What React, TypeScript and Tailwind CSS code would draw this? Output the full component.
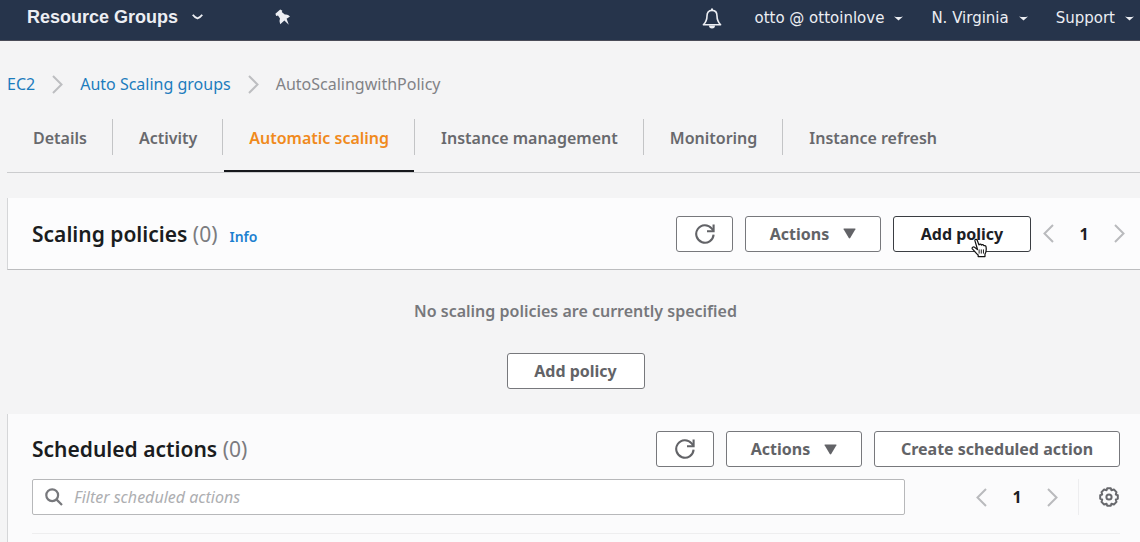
import React from "react";

const BODY = "font-['Noto_Sans','Open_Sans',sans-serif]";

function Caret({ className = "" }: { className?: string }) {
  return (
    <svg className={className} width="9" height="5" viewBox="0 0 9 5" fill="currentColor" aria-hidden="true">
      <path d="M0 0.4 Q4.5 1.6 9 0.4 L4.5 4.6 Z" />
    </svg>
  );
}

function Chevron({ left = false }: { left?: boolean }) {
  return (
    <svg width="11" height="19" viewBox="0 0 11 19" fill="none" stroke="currentColor" strokeWidth="2" aria-hidden="true">
      <path d={left ? "M10 1 L1.5 9.5 L10 18" : "M1 1 L9.5 9.5 L1 18"} />
    </svg>
  );
}

function RefreshIcon() {
  return (
    <svg width="20" height="20" viewBox="0 0 20 20" fill="none" stroke="currentColor" strokeWidth="2.1" aria-hidden="true">
      <path d="M18.6 10.6 A8.7 8.7 0 1 1 16.6 4.4 L18.4 6.6" />
      <path d="M18.6 0.6 V7.2 H12" />
    </svg>
  );
}

function PinIcon() {
  return (
    <svg width="16" height="17" viewBox="0 0 16 17" fill="currentColor" aria-hidden="true">
      <path d="M5.2 0.4 L7.4 1.8 L6.8 3 L9.8 5.6 Q12.6 4.8 15 7.6 L11.6 9.8 L13.8 15.8 L9.4 11.6 L5.2 15.2 Q3.8 12.4 5 9.6 L3 6.6 L1.2 7 L0.4 4.8 Z" />
    </svg>
  );
}

function BellIcon() {
  return (
    <svg width="20" height="21" viewBox="0 0 20 21" fill="none" stroke="currentColor" strokeWidth="1.6" strokeLinejoin="round" aria-hidden="true">
      <path d="M10 2.4 C6.4 2.4 5 5 5 8 C5 12.8 3.8 14.4 1.4 16.8 H18.6 C16.2 14.4 15 12.8 15 8 C15 5 13.6 2.4 10 2.4 Z" />
      <path d="M10 0.6 V2.4" strokeWidth="2" />
      <path d="M7 17.4 A3 3 0 0 0 13 17.4 Z" fill="currentColor" stroke="none" />
    </svg>
  );
}

function GearIcon() {
  return (
    <svg width="20" height="20" viewBox="0 0 20 20" fill="none" stroke="currentColor" strokeWidth="2" strokeLinejoin="round" aria-hidden="true">
      <path d="M8.2 1.2 H11.8 L12.4 3.2 L14.9 2.5 L17.5 5.1 L16.8 7.6 L18.8 8.2 V11.8 L16.8 12.4 L17.5 14.9 L14.9 17.5 L12.4 16.8 L11.8 18.8 H8.2 L7.6 16.8 L5.1 17.5 L2.5 14.9 L3.2 12.4 L1.2 11.8 V8.2 L3.2 7.6 L2.5 5.1 L5.1 2.5 L7.6 3.2 Z" />
      <circle cx="10" cy="10" r="2.6" />
    </svg>
  );
}

function HandPointer() {
  return (
    <svg
      className="pointer-events-none absolute top-[21px] left-[77px]"
      width="17"
      height="20"
      viewBox="0 0 18 21"
      fill="#fff"
      stroke="#111"
      strokeWidth="1.3"
      strokeLinejoin="round"
      aria-hidden="true"
    >
      <path d="M6.6 11 L4.2 3 C3.8 1.2 6 0.6 6.6 2.2 L8.4 7.2 C9 6.2 10.6 6.2 11 7.4 C11.8 6.6 13.2 6.8 13.5 8 C14.8 7.6 16 8.4 16 9.8 C16.4 13 16 15 14.8 17 V19.6 H7.6 V18 C5.6 16.4 4 14 1.4 11.4 C0.6 10 2.4 8.8 3.8 9.8 L6.8 12.2 Z" />
      <path d="M8.6 12 V16.4 M10.9 12 V16.4 M13.2 12 V16.4" strokeWidth="1" />
    </svg>
  );
}

type ButtonProps = { strong?: boolean; label?: string; className?: string; children: React.ReactNode };

function Button({ strong = false, label, className = "px-6", children }: ButtonProps) {
  return (
    <button
      type="button"
      aria-label={label}
      className={`relative flex h-9 shrink-0 items-center justify-center rounded-[3px] border bg-white text-base font-bold whitespace-nowrap ${
        strong ? "border-[#3a3d42] text-[#1d2025]" : "border-[#77787c] text-[#626367]"
      } ${className}`}
    >
      {children}
    </button>
  );
}

function ActionsButton() {
  return (
    <Button className="w-[136px] gap-3.5">
      Actions
      <svg width="13" height="11" viewBox="0 0 13 11" fill="currentColor" aria-hidden="true">
        <path d="M1 0.5 H12 Q12.8 0.5 12.4 1.3 L7.2 10 Q6.5 10.9 5.8 10 L0.6 1.3 Q0.2 0.5 1 0.5 Z" />
      </svg>
    </Button>
  );
}

function Pager() {
  return (
    <nav aria-label="Pagination" className="flex items-center text-base font-bold text-[#1d2025]">
      <button type="button" aria-label="Previous page" className="text-[#b9babd]">
        <Chevron left />
      </button>
      <button type="button" aria-current="page" className="w-[60px]">
        1
      </button>
      <button type="button" aria-label="Next page" className="text-[#b9babd]">
        <Chevron />
      </button>
    </nav>
  );
}

function SectionTitle({ children }: { children: React.ReactNode }) {
  return (
    <h2 className="text-[21px] leading-7 font-semibold text-[#1a1c20]">
      {children} <span className="font-normal text-[#7b7c80]">(0)</span>
    </h2>
  );
}

const tabs = ["Details", "Activity", "Automatic scaling", "Instance management", "Monitoring", "Instance refresh"];
const activeTab = "Automatic scaling";

function TopBar() {
  return (
    <header className="flex h-[41px] items-start border-b border-[#4a4c58] bg-[#26344b] pt-1.5 pl-[27px] whitespace-nowrap text-[#eceef3]">
      <button type="button" className="flex h-[22px] items-center gap-3.5 font-['Liberation_Sans',Arial,sans-serif] text-lg font-bold">
        Resource Groups
        <svg width="11" height="6" viewBox="0 0 11 6" fill="none" stroke="currentColor" strokeWidth="1.9" aria-hidden="true">
          <path d="M0.8 0.8 Q3 3.8 5.5 4.4 Q8 3.8 10.2 0.8" />
        </svg>
      </button>
      <button type="button" aria-label="Pin" className="ml-[72px] flex h-[22px] items-center">
        <PinIcon />
      </button>
      <div className="ml-auto flex h-6 items-center font-['DejaVu_Sans',Verdana,sans-serif] text-[15px]">
        <button type="button" aria-label="Notifications" className="mr-8">
          <BellIcon />
        </button>
        <button type="button" className="mr-7 flex items-center gap-2.5">
          otto @ ottoinlove <Caret />
        </button>
        <button type="button" className="mr-7 flex items-center gap-2.5">
          N. Virginia <Caret />
        </button>
        <button type="button" className="mr-1.5 flex items-center gap-2.5">
          Support <Caret />
        </button>
      </div>
    </header>
  );
}

export default function App() {
  return (
    <div className={`min-h-screen overflow-hidden bg-[#f4f4f5] ${BODY}`}>
      <TopBar />

      <nav aria-label="Breadcrumb" className="mt-[31px] flex h-6 items-center pl-[7px] text-base whitespace-nowrap">
        <a href="#ec2" className="text-[#1c7cbd]">
          EC2
        </a>
        <span className="mx-[17px] text-[#bdbec1]">
          <Chevron />
        </span>
        <a href="#groups" className="text-[#1c7cbd]">
          Auto Scaling groups
        </a>
        <span className="mx-[17px] text-[#bdbec1]">
          <Chevron />
        </span>
        <span className="text-[#818286]">AutoScalingwithPolicy</span>
      </nav>

      <main className="pl-[7px]">
        <div role="tablist" className="mt-[23px] flex border-b border-[#cbccce] text-base font-semibold whitespace-nowrap">
          {tabs.map((tab, i) => (
            <div key={tab} className="flex">
              {i > 0 && <span className="h-9 w-px bg-[#c3c4c6]" />}
              <button
                type="button"
                role="tab"
                aria-selected={tab === activeTab}
                className={`ml-px flex h-[53px] items-start border-b-2 px-[25px] pt-[7px] ${
                  tab === activeTab ? "border-[#16181c] text-[#f08a1c]" : "border-transparent text-[#68696d]"
                }`}
              >
                {tab}
              </button>
            </div>
          ))}
        </div>

        <section className="mt-[25px]">
          <div className="flex h-[72px] items-center justify-between border-b border-l border-b-[#bcbdbf] border-l-[#d5d6d8] bg-[#fcfcfd] pr-[15px] pl-6">
            <div className="flex items-baseline gap-3">
              <SectionTitle>Scaling policies</SectionTitle>
              <a href="#info" className="text-sm font-semibold text-[#1b80d0]">
                Info
              </a>
            </div>
            <div className="flex items-center gap-3">
              <Button label="Refresh policies" className="w-[57px]">
                <RefreshIcon />
              </Button>
              <ActionsButton />
              <Button strong className="w-[138px]">
                Add policy
                <HandPointer />
              </Button>
              <Pager />
            </div>
          </div>
          <div className="flex flex-col items-center gap-[30px] pt-[29px] pb-[25px] pl-1">
            <p className="text-base font-semibold text-[#77787c]">No scaling policies are currently specified</p>
            <Button className="w-[138px]">Add policy</Button>
          </div>
        </section>

        <section className="min-h-32 border-l border-[#d5d6d8] bg-[#fbfbfc] pt-[17px] pl-6">
          <div className="flex items-center justify-between pr-5">
            <SectionTitle>Scheduled actions</SectionTitle>
            <div className="flex gap-3">
              <Button label="Refresh actions" className="w-[58px]">
                <RefreshIcon />
              </Button>
              <ActionsButton />
              <Button className="w-[246px]">Create scheduled action</Button>
            </div>
          </div>
          <div className="mt-3 flex items-center pr-[21px]">
            <label className="flex h-9 flex-1 items-center gap-[11px] rounded-[2px] border border-[#b7b8ba] bg-white pl-3 text-[#77787c]">
              <svg width="18" height="18" viewBox="0 0 18 18" fill="none" stroke="currentColor" strokeWidth="2.2" aria-hidden="true">
                <circle cx="7.2" cy="7.2" r="5.9" />
                <path d="M11.4 11.4 L17 17" />
              </svg>
              <input
                type="text"
                aria-label="Filter scheduled actions"
                placeholder="Filter scheduled actions"
                className="min-w-0 flex-1 bg-transparent text-base outline-none placeholder:text-[#adaeb1] placeholder:italic"
              />
            </label>
            <div className="ml-[71px]">
              <Pager />
            </div>
            <span className="mx-5 h-9 w-px bg-[#ededef]" />
            <button type="button" aria-label="Preferences" className="text-[#68696d]">
              <GearIcon />
            </button>
          </div>
          <hr className="mt-[18px] mr-5 border-[#eeeeef]" />
        </section>
      </main>
    </div>
  );
}
